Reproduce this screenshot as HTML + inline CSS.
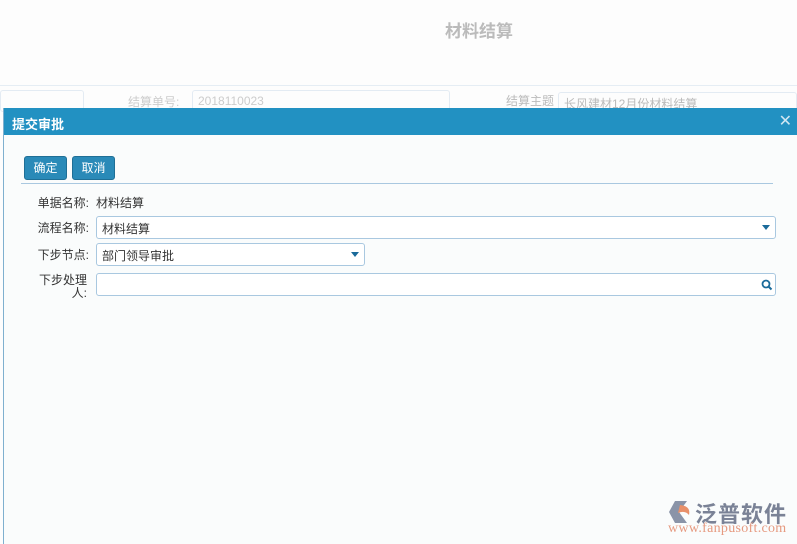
<!DOCTYPE html>
<html><head><meta charset="utf-8"><style>
*{margin:0;padding:0;box-sizing:border-box}
body{width:797px;height:544px;overflow:hidden;background:#fdfdfd;font-family:"Liberation Sans","Noto Sans CJK SC",sans-serif;position:relative;font-size:12px;color:#333}
.a{position:absolute}
.title{left:445px;top:17px;font-size:17px;font-weight:bold;color:#bbb}
.inp{border:1px solid #e3ebf3;border-radius:3px;background:#fdfdfd}
.lbl{color:#ccc;font-size:12px}
.dlg{left:3px;top:108px;width:794px;height:436px;background:#fafcfc;border-left:1px solid #7fb0cf}
.hd{left:0;top:0;width:794px;height:27px;background:#2291c2;color:#fff;font-weight:bold;font-size:13px;padding:6px 0 0 8px}
.x{right:6px;top:3px;color:#cfe6f2;font-size:16px;font-weight:normal}
.btn{top:48px;height:24px;background:#2a8ab8;border:1px solid #1f6f96;border-radius:3px;color:#fff;font-size:12px;text-align:center;line-height:22px}
.rl{color:#333;font-size:12px;text-align:right}
.box{border:1px solid #a9c8e0;border-radius:3px;background:#fff;height:23px;padding:3px 5px;font-size:12px}
.tri{width:0;height:0;border-left:4px solid transparent;border-right:4px solid transparent;border-top:5px solid #1a6a9a}
</style></head><body>
<div class="a title">材料结算</div>
<div class="a" style="left:0;top:85px;width:797px;height:1px;background:#e5edf4"></div>
<div class="a inp" style="left:0;top:90px;width:84px;height:22px"></div>
<div class="a lbl" style="left:128px;top:93px">结算单号:</div>
<div class="a inp" style="left:192px;top:90px;width:258px;height:22px;color:#ccc;padding:3px 5px">2018110023</div>
<div class="a lbl" style="left:506px;top:92px;color:#bbb">结算主题</div>
<div class="a inp" style="left:558px;top:92px;width:239px;height:20px;color:#bbb;padding:2px 5px">长风建材12月份材料结算</div>
<div class="a dlg">
 <div class="a hd">提交审批<span class="a x">✕</span></div>
 <div class="a btn" style="left:20px;width:43px">确定</div>
 <div class="a btn" style="left:68px;width:43px">取消</div>
 <div class="a" style="left:17px;top:75px;width:752px;height:1px;background:#a9c8e0"></div>
 <div class="a rl" style="left:20px;top:86px;width:65px">单据名称:</div>
 <div class="a" style="left:92px;top:86px">材料结算</div>
 <div class="a rl" style="left:20px;top:111px;width:65px">流程名称:</div>
 <div class="a box" style="left:92px;top:108px;width:680px">材料结算</div>
 <div class="a tri" style="left:758px;top:117px"></div>
 <div class="a rl" style="left:20px;top:138px;width:65px">下步节点:</div>
 <div class="a box" style="left:92px;top:135px;width:269px">部门领导审批</div>
 <div class="a tri" style="left:347px;top:144px"></div>
 <div class="a rl" style="left:20px;top:166px;width:63px;line-height:13px">下步处理<br>人:</div>
 <div class="a box" style="left:92px;top:165px;width:680px"></div>
 <svg class="a" style="left:757px;top:171px" width="12" height="12" viewBox="0 0 12 12"><circle cx="5" cy="5" r="3.5" fill="none" stroke="#1a6a9a" stroke-width="1.8"/><line x1="7.5" y1="7.5" x2="10.5" y2="10.5" stroke="#1a6a9a" stroke-width="2"/></svg>
</div>
<svg class="a" style="left:667px;top:500px" width="28" height="24" viewBox="0 0 28 24"><path d="M8 1 L20 1 L12 12 L20 23 L8 23 L2 12 Z" fill="#8a94a8"/><path d="M13 5 Q24 6 22 15 Q18 10 11 13 Z" fill="#e8906a"/></svg>
<div class="a" style="left:695px;top:497px;font-size:22px;font-weight:bold;color:#7a8296;letter-spacing:1px">泛普软件</div>
<div class="a" style="left:668px;top:521px;font-size:14px;color:#e69a80;font-family:'Liberation Serif',serif;letter-spacing:0.3px">www.fanpusoft.com</div>
</body></html>
